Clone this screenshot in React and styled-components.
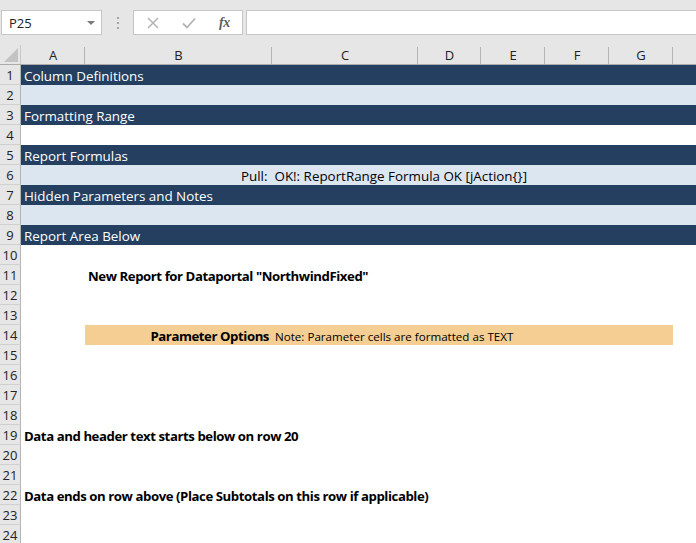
import React from 'react';
import styled, { createGlobalStyle } from 'styled-components';

const GlobalStyle = createGlobalStyle`
  html, body {
    margin: 0;
    padding: 0;
    background: #ffffff;
    overflow: hidden;
  }
  body {
    font-family: 'Open Sans', 'Liberation Sans', sans-serif;
  }
`;

const COLS = [64, 187, 146, 63, 64, 64, 64, 64];
const LETTERS = ['A', 'B', 'C', 'D', 'E', 'F', 'G', ''];
const template = `21px ${COLS.map((w) => w + 'px').join(' ')}`;

const Page = styled.div`
  width: 696px;
  height: 543px;
  overflow: hidden;
  background: #ffffff;
`;

const Toolbar = styled.div`
  height: 45px;
  background: #e6e6e6;
  display: flex;
  align-items: flex-start;
  padding-top: 10px;
  box-sizing: border-box;
  padding-left: 1px;
`;

const NameBox = styled.div`
  width: 101px;
  height: 25px;
  box-sizing: border-box;
  background: #fff;
  border: 1px solid #c6c6c6;
  display: flex;
  align-items: center;
  justify-content: space-between;
  padding: 0 6px 0 7px;
  font-size: 13px;
  color: #222;
`;

const Caret = styled.span`
  width: 0;
  height: 0;
  border-left: 4px solid transparent;
  border-right: 4px solid transparent;
  border-top: 4px solid #7a7a7a;
`;

const Grip = styled.div`
  width: 31px;
  height: 25px;
  display: flex;
  flex-direction: column;
  align-items: center;
  justify-content: center;
  gap: 3px;
  span {
    width: 2px;
    height: 2px;
    background: #a6a6a6;
  }
`;

const FxButtons = styled.div`
  width: 110px;
  height: 25px;
  box-sizing: border-box;
  background: #fff;
  border: 1px solid #c6c6c6;
  display: flex;
  align-items: center;
  padding-left: 13px;
  gap: 23px;
`;

const FxLabel = styled.span`
  font-family: 'Liberation Serif', serif;
  font-style: italic;
  font-weight: 700;
  font-size: 14px;
  color: #606060;
  letter-spacing: -0.5px;
`;

const FormulaInput = styled.div`
  flex: 1;
  margin-left: 3px;
  height: 25px;
  box-sizing: border-box;
  background: #fff;
  border: 1px solid #c6c6c6;
  border-right: none;
`;

const HeaderRow = styled.div`
  display: grid;
  grid-template-columns: ${template};
  height: 20px;
  background: #e6e6e6;
  border-bottom: 1px solid #ababab;
  box-sizing: border-box;
`;

const Corner = styled.div`
  position: relative;
  border-right: 1px solid #c8c8c8;
  &::after {
    content: '';
    position: absolute;
    right: 2px;
    bottom: 2px;
    width: 0;
    height: 0;
    border-left: 14px solid transparent;
    border-bottom: 14px solid #c3c3c3;
  }
`;

const ColHead = styled.div`
  display: flex;
  align-items: center;
  justify-content: center;
  font-size: 13px;
  color: #222;
  position: relative;
  &::after {
    content: '';
    position: absolute;
    right: 0;
    top: 2px;
    bottom: 0;
    width: 1px;
    background: #b4b4b4;
  }
`;

const Row = styled.div`
  display: grid;
  grid-template-columns: ${template};
  height: 20px;
`;

const RowNum = styled.div`
  background: #e6e6e6;
  border-right: 1px solid #b4b4b4;
  border-bottom: 1px solid #d0d0d0;
  box-sizing: border-box;
  display: flex;
  align-items: center;
  justify-content: center;
  font-size: 13px;
  color: #222;
`;

const Band = styled.div`
  grid-column: 2 / -1;
  background: ${({ tone }) => (tone === 'dark' ? '#243f60' : tone === 'light' ? '#dce6f1' : '#fff')};
  color: ${({ tone }) => (tone === 'dark' ? '#fff' : '#000')};
  display: flex;
  align-items: center;
  padding: 2px 0 0 3px;
  box-sizing: border-box;
  font-size: 13.4px;
  white-space: nowrap;
`;

const Cell = styled.div`
  grid-column: ${({ span }) => span};
  display: flex;
  align-items: center;
  justify-content: ${({ right }) => (right ? 'flex-end' : 'flex-start')};
  padding: 2px 3px 0;
  box-sizing: border-box;
  font-size: ${({ small }) => (small ? '11.6px' : '13.2px')};
  font-weight: ${({ bold }) => (bold ? 700 : 400)};
  letter-spacing: ${({ bold }) => (bold ? '-0.43px' : '0')};
  color: #000;
  white-space: nowrap;
`;

const ParamBand = styled.div`
  grid-column: 3 / 9;
  background: #f4ce92;
  display: grid;
  grid-template-columns: 187px 1fr;
  align-items: center;
`;

const CenterWide = styled.div`
  width: 727px;
  margin-left: 7px;
  text-align: center;
`;

function XIcon() {
  return (
    <svg width="12" height="12" viewBox="0 0 12 12">
      <path d="M1 1 L11 11 M11 1 L1 11" stroke="#b3b3b3" strokeWidth="1.5" />
    </svg>
  );
}

function CheckIcon() {
  return (
    <svg width="14" height="12" viewBox="0 0 14 12">
      <path d="M1 6.5 L5 10.5 L13 1.5" stroke="#b3b3b3" strokeWidth="1.8" fill="none" />
    </svg>
  );
}

export default function App() {
  const rows = [];
  for (let i = 1; i <= 24; i++) {
    let content = null;
    if (i === 1) content = <Band tone="dark">Column Definitions</Band>;
    else if (i === 2) content = <Band tone="light" />;
    else if (i === 3) content = <Band tone="dark">Formatting Range</Band>;
    else if (i === 5) content = <Band tone="dark">Report Formulas</Band>;
    else if (i === 6)
      content = (
        <Band tone="light">
          <CenterWide>Pull:&nbsp; OK!: ReportRange Formula OK [jAction{'{}'}]</CenterWide>
        </Band>
      );
    else if (i === 7) content = <Band tone="dark">Hidden Parameters and Notes</Band>;
    else if (i === 8) content = <Band tone="light" />;
    else if (i === 9) content = <Band tone="dark">Report Area Below</Band>;
    else if (i === 11)
      content = (
        <Cell span="3 / 6" bold>
          New Report for Dataportal "NorthwindFixed"
        </Cell>
      );
    else if (i === 14)
      content = (
        <ParamBand>
          <Cell right bold>Parameter Options</Cell>
          <Cell small>Note: Parameter cells are formatted as TEXT</Cell>
        </ParamBand>
      );
    else if (i === 19)
      content = (
        <Cell span="2 / 6" bold>
          Data and header text starts below on row 20
        </Cell>
      );
    else if (i === 22)
      content = (
        <Cell span="2 / 8" bold>
          Data ends on row above (Place Subtotals on this row if applicable)
        </Cell>
      );
    rows.push(
      <Row key={i}>
        <RowNum>{i}</RowNum>
        {content}
      </Row>
    );
  }

  return (
    <Page>
      <GlobalStyle />
      <Toolbar>
        <NameBox>
          P25
          <Caret />
        </NameBox>
        <Grip>
          <span />
          <span />
          <span />
        </Grip>
        <FxButtons>
          <XIcon />
          <CheckIcon />
          <FxLabel>fx</FxLabel>
        </FxButtons>
        <FormulaInput />
      </Toolbar>
      <HeaderRow>
        <Corner />
        {LETTERS.map((l, idx) => (
          <ColHead key={idx}>{l}</ColHead>
        ))}
      </HeaderRow>
      {rows}
    </Page>
  );
}
